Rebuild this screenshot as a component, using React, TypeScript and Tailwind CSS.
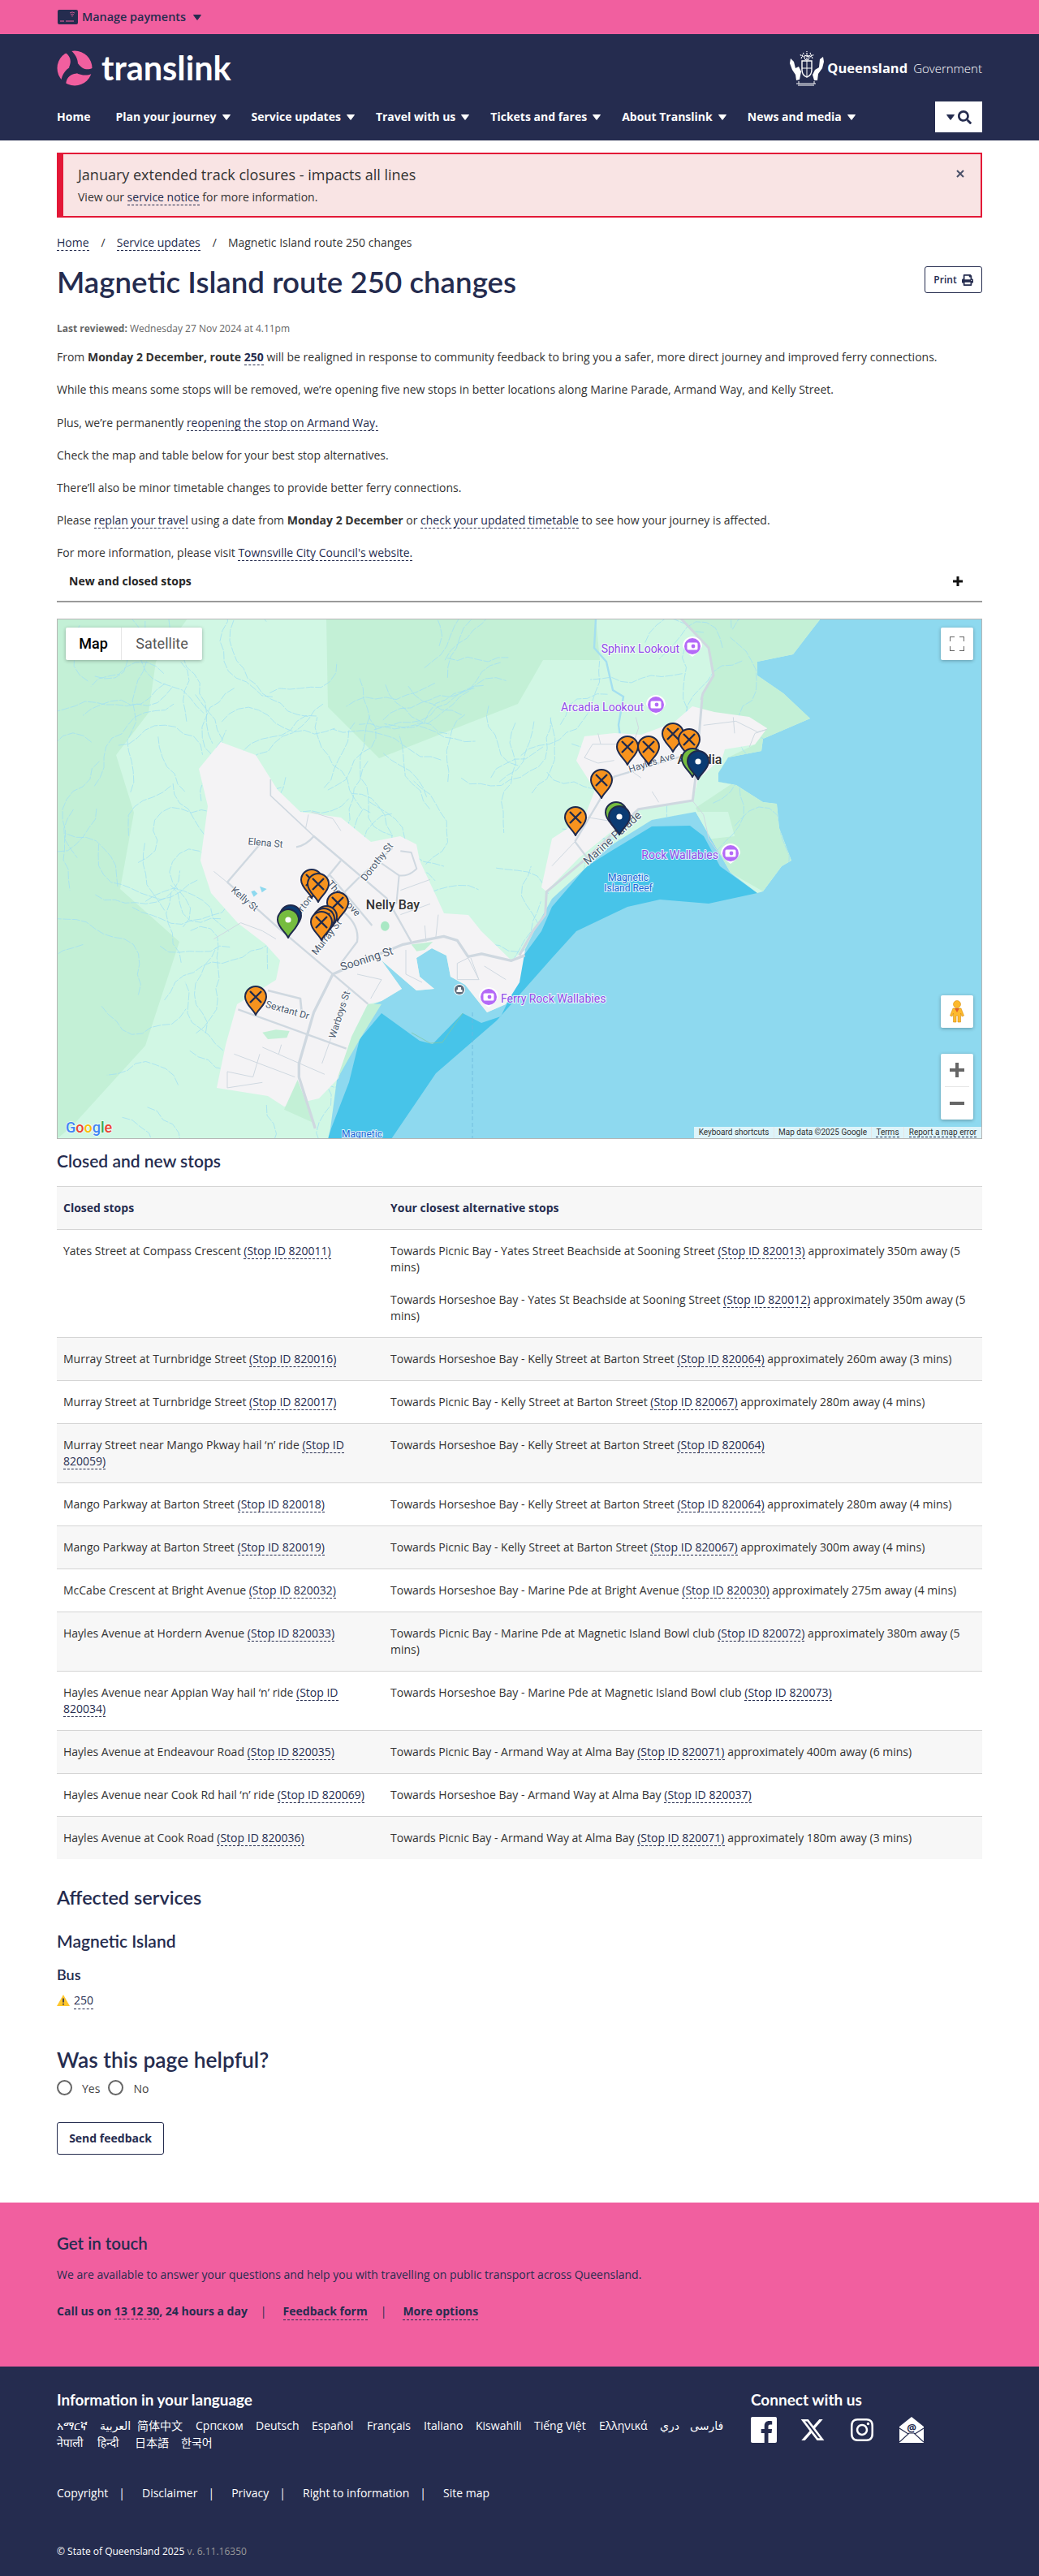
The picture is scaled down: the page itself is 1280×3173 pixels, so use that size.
import React from "react";
import { FaPrint, FaSearch, FaInstagram } from "react-icons/fa";
import { FaXTwitter } from "react-icons/fa6";

const L = ({ children, className = "" }: { children: React.ReactNode; className?: string }) => (
  <a className={"border-b border-dashed border-[#252c4f] text-[#252c4f] " + className}>{children}</a>
);

const Caret = ({ color = "#fff" }: { color?: string }) => (
  <svg width="10" height="7" viewBox="0 0 10 7" className="shrink-0"><path d="M0.5 0.5H9.5L5 6.5Z" fill={color} stroke={color} strokeLinejoin="round" /></svg>
);

type Row = { a: [string, string, string?]; b: [string, string, string][] ; };
const rows: Row[] = [
  { a: ["Yates Street at Compass Crescent ", "(Stop ID 820011)"], b: [["Towards Picnic Bay - Yates Street Beachside at Sooning Street ", "(Stop ID 820013)", " approximately 350m away (5 mins)"], ["Towards Horseshoe Bay - Yates St Beachside at Sooning Street ", "(Stop ID 820012)", " approximately 350m away (5 mins)"]] },
  { a: ["Murray Street at Turnbridge Street ", "(Stop ID 820016)"], b: [["Towards Horseshoe Bay - Kelly Street at Barton Street ", "(Stop ID 820064)", " approximately 260m away (3 mins)"]] },
  { a: ["Murray Street at Turnbridge Street ", "(Stop ID 820017)"], b: [["Towards Picnic Bay - Kelly Street at Barton Street ", "(Stop ID 820067)", " approximately 280m away (4 mins)"]] },
  { a: ["Murray Street near Mango Pkway hail ‘n’ ride ", "(Stop ID 820059)"], b: [["Towards Horseshoe Bay - Kelly Street at Barton Street ", "(Stop ID 820064)", ""]] },
  { a: ["Mango Parkway at Barton Street ", "(Stop ID 820018)"], b: [["Towards Horseshoe Bay - Kelly Street at Barton Street ", "(Stop ID 820064)", " approximately 280m away (4 mins)"]] },
  { a: ["Mango Parkway at Barton Street ", "(Stop ID 820019)"], b: [["Towards Picnic Bay - Kelly Street at Barton Street ", "(Stop ID 820067)", " approximately 300m away (4 mins)"]] },
  { a: ["McCabe Crescent at Bright Avenue ", "(Stop ID 820032)"], b: [["Towards Horseshoe Bay - Marine Pde at Bright Avenue ", "(Stop ID 820030)", " approximately 275m away (4 mins)"]] },
  { a: ["Hayles Avenue at Hordern Avenue ", "(Stop ID 820033)"], b: [["Towards Picnic Bay - Marine Pde at Magnetic Island Bowl club ", "(Stop ID 820072)", " approximately 380m away (5 mins)"]] },
  { a: ["Hayles Avenue near Appian Way hail ‘n’ ride ", "(Stop ID 820034)"], b: [["Towards Horseshoe Bay - Marine Pde at Magnetic Island Bowl club ", "(Stop ID 820073)", ""]] },
  { a: ["Hayles Avenue at Endeavour Road ", "(Stop ID 820035)"], b: [["Towards Picnic Bay - Armand Way at Alma Bay ", "(Stop ID 820071)", " approximately 400m away (6 mins)"]] },
  { a: ["Hayles Avenue near Cook Rd hail ‘n’ ride ", "(Stop ID 820069)"], b: [["Towards Horseshoe Bay - Armand Way at Alma Bay ", "(Stop ID 820037)", ""]] },
  { a: ["Hayles Avenue at Cook Road ", "(Stop ID 820036)"], b: [["Towards Picnic Bay - Armand Way at Alma Bay ", "(Stop ID 820071)", " approximately 180m away (3 mins)"]] },
];

const LAND = "1011,762 1000,776 977,806 933,815 933,832 965,854 998,885 940,910 938,925 897,933 885,952 885,963 907,967 940,988 957,990 960,1020 975,1060 963,1067 940,1098 933,1100 900,1075 880,1040 857,1000 803,1010 750,1043 680,1107 660,1143 643,1177 650,1157 635,1183 640,1203 623,1237 600,1247 573,1213 555,1203 550,1177 532,1168 513,1180 517,1203 535,1218 513,1220 470,1183 495,1218 470,1233 460,1237 443,1263 427,1303 415,1330 407,1390 404,1403 70,1403 70,762";
const TOWN1 = "272,914 315,930 342,973 370,1000 420,1007 457,1037 493,1030 513,1040 517,1060 537,1103 547,1125 577,1127 593,1147 630,1183 647,1170 640,1210 623,1237 600,1247 573,1213 555,1203 550,1177 532,1168 513,1180 517,1203 535,1218 513,1220 470,1183 495,1218 470,1233 453,1237 433,1277 417,1328 393,1353 350,1363 330,1350 267,1340 278,1287 292,1237 340,1207 345,1183 327,1163 293,1137 260,1100 247,1060 256,993 245,947";
const TOWN2 = "710,937 720,907 757,903 790,905 830,890 853,870 880,877 923,883 945,897 930,917 893,923 890,933 860,960 853,987 787,997 767,1013 713,1057 673,1098 667,1093 680,1033 720,1007 733,973";

function streams() {
  let s = 20250;
  const r = () => { s = (s * 1664525 + 1013904223) >>> 0; return s / 4294967296; };
  const out: string[] = [];
  for (let i = 0; i < 170; i++) {
    let x = 70 + r() * 860, y = 762 + r() * 640;
    let a = r() * 6.28;
    let d = `M${x.toFixed(1)} ${y.toFixed(1)}`;
    const n = 6 + Math.floor(r() * 8);
    for (let k = 0; k < n; k++) {
      a += (r() - 0.5) * 1.3;
      x += Math.cos(a) * 13; y += Math.sin(a) * 13;
      d += ` L${x.toFixed(1)} ${y.toFixed(1)}`;
    }
    out.push(d);
  }
  return out;
}
const STREAMS = streams();

const Pin = ({ x, y, fill, kind }: { x: number; y: number; fill: string; kind: "x" | "dot" }) => (
  <g transform={`translate(${x} ${y})`}>
    <path d="M0 21 C-3 14 -13 8 -13 -1 A13 13 0 1 1 13 -1 C13 8 3 14 0 21Z" fill={fill} stroke="#1f2a4d" strokeWidth="2" strokeLinejoin="round" />
    {kind === "x" ? (
      <path d="M-7 -8 L7 6 M7 -8 L-7 6" stroke="#1f2a4d" strokeWidth="2.4" />
    ) : (
      <circle cx="0" cy="-1" r="3.6" fill="#fff" />
    )}
  </g>
);

const Poi = ({ x, y }: { x: number; y: number }) => (
  <g transform={`translate(${x} ${y})`}>
    <path d="M-12 0 A12 12 0 1 1 12 0 Q8 8 0 13 Q-8 8 -12 0Z" fill="#fff" />
    <circle r="10" fill="#b46af7" />
    <rect x="-6.5" y="-4.5" width="13" height="9" rx="1.5" fill="#fff" />
    <circle cx="1" cy="0" r="2.4" fill="#b46af7" />
  </g>
);

const Lbl = ({ x, y, r = 0, size = 12, fill = "#4d5b70", weight = 400, anchor = "middle", children }: any) => (
  <text x={x} y={y} transform={r ? `rotate(${r} ${x} ${y})` : undefined} fontSize={size} fontWeight={weight} fill={fill} textAnchor={anchor} dominantBaseline="middle" stroke="#ffffff" strokeOpacity="0.8" strokeWidth="2" paintOrder="stroke" fontFamily="Roboto, sans-serif">{children}</text>
);

function MapArt() {
  return (
    <svg viewBox="71 763 1138 639" className="block w-full h-full" preserveAspectRatio="none">
      <defs><clipPath id="land"><polygon points={LAND} /></clipPath></defs>
      <rect x="70" y="762" width="1140" height="641" fill="#8ed9ef" />
      <polygon points="404,1403 408,1390 430,1333 443,1280 470,1248 517,1282 533,1286 570,1248 593,1260 617,1252 635,1215 643,1180 667,1147 680,1117 723,1067 750,1050 803,1018 850,1017 867,1030 887,1067 933,1100 873,1113 813,1108 773,1117 710,1147 680,1180 612,1257 537,1322 482,1403" fill="#47c4e9" />
      <polygon points={LAND} fill="#d1f7e4" />
      <g clipPath="url(#land)">
        <polygon points="70,762 231,762 192,815 183,878 143,930 165,1001 148,1095 221,1160 179,1288 89,1387 70,1403" fill="#c3f0d6" />
        <polygon points="402,762 404,871 467,934 638,867 669,813 739,813 734,762" fill="#c3f0d6" />
        <polygon points="839,762 873,798 879,832 866,854 860,902 870,890 900,880 945,897 930,917 897,933 885,952 885,963 907,967 940,988 957,990 960,1020 975,1060 963,1067 940,1098 900,1075 880,1040 857,995 1000,900 1020,762" fill="#c3f0d6" />
        <polygon points="857,1000 897,1000 905,1030 860,1035" fill="#d1f7e4" />
        {STREAMS.map((d, i) => <path key={i} d={d} fill="none" stroke="#a2e0f2" strokeWidth="0.8" strokeDasharray="10 1.5" />)}
        <path d="M734 762 L732 798 L747 815 L755 850 L768 858 L762 893 L766 920 L762 958 L772 975" fill="none" stroke="#a4dff0" strokeWidth="2.4" />
      </g>
      <polygon points={TOWN1} fill="#f4f3f5" />
      <polygon points={TOWN2} fill="#f4f3f5" />
      <g transform="translate(230 970) scale(0.3333)" fill="none" stroke="#cfd8e0" strokeLinejoin="round">
        <path d="M410 1080 L360 1190 L470 1240Z" fill="#c3f0d6" stroke="none" />
        <path d="M670 800 L720 800 L640 930 L600 1000 L555 1080 L610 920Z" fill="#c3f0d6" stroke="none" />
        <path d="M280 905 L330 895 L380 900 L370 925 L300 930Z" fill="#c3f0d6" stroke="none" />
        <path d="M830 580 L910 570 L880 600 L850 605Z" fill="#c3f0d6" stroke="none" />
        <ellipse cx="733" cy="512" rx="16" ry="18" fill="#a9e8c4" stroke="none" />
        <path d="M250 380 L262 392 L248 404 L238 385Z M270 365 L296 375 L278 388Z" fill="#8ed9ef" stroke="none" />
        <path d="M1250 620 L1200 640 L1090 615 L1040 625 L1000 565 L950 550 L800 580 L640 645 L540 690 L470 830 L415 1020 L415 1070 L475 1260" strokeWidth="10" />
        <path d="M150 350 L340 520 L540 690 L670 800" strokeWidth="7" />
        <path d="M150 350 L275 205 M405 220 Q440 215 470 180 L740 410 L830 570" strokeWidth="7" />
        <path d="M470 180 L310 30 L310 -30" strokeWidth="5" />
        <path d="M570 270 L480 380 M640 330 L540 430 M530 325 L685 510 M580 460 Q640 510 630 570 L570 650" strokeWidth="7" />
        <path d="M640 330 L760 225 M790 235 L830 240 L850 300 Q820 330 785 325 L720 280 M785 325 L775 430" strokeWidth="6" />
        <path d="M300 750 L420 780 L425 830" strokeWidth="8" />
        <path d="M190 820 L590 965" strokeWidth="7" />
        <path d="M600 740 L500 1020 M280 960 L510 1060 M175 985 L400 1070 M270 985 L245 1070 L150 1050 L150 1110 L280 1090 M630 690 L720 710 L680 780 M350 950 L340 985 M810 600 L810 690 L870 720 M1040 630 L1000 650 L1000 710 L1080 710 L1040 630 M1050 630 L1080 710 M1100 660 L1180 710 M880 510 L885 570 M930 470 L920 560 M100 560 L200 500 L280 530 L330 560 M450 100 L440 150 M460 90 L540 115 L570 160 M790 470 L900 430 M790 380 L900 340 M100 310 L180 375" strokeWidth="3" />
      </g>
      <g transform="translate(640 860) scale(0.3333)" fill="none" stroke="#cfd8e0" strokeLinejoin="round">
        <path d="M675 0 L650 300 L640 378 L440 410 L250 590 L100 715 L95 800 L50 860 L0 950" strokeWidth="9" />
        <path d="M205 530 L300 370 L350 290 L600 215 M205 530 L250 590" strokeWidth="7" />
        <path d="M120 620 L205 530 M250 440 L340 455 M240 220 L270 170 L430 170 M240 220 L290 240 L350 230 M290 130 L300 170 M430 70 L440 110 L420 170 M415 270 L450 295 M490 345 L515 385 M680 100 L800 85 L880 125 L915 115 L870 130 L850 180 M790 70 L795 130 M640 380 L680 430 L700 520 L735 570" strokeWidth="3" />
      </g>
      <path d="M839 762 L873 798 L879 832 L866 854 L864 862" fill="none" stroke="#cfd8e0" strokeWidth="3" />
      <path d="M582 1247 V1403" stroke="#6cb8dd" strokeWidth="0.8" strokeDasharray="5 3" fill="none" />
      <path d="M507 1272 L530 1285 L545 1284 L570 1248" stroke="#7fc8a8" strokeWidth="0.8" fill="none" />

      <Lbl x={327} y={1039} r={5}>Elena St</Lbl>
      <Lbl x={301} y={1108} r={40}>Kelly St</Lbl>
      <Lbl x={465} y={1062} r={-52}>Dorothy St</Lbl>
      <Lbl x={377} y={1113} r={-52}>Barton St</Lbl>
      <Lbl x={403} y={1155} r={-52}>Murray St</Lbl>
      <Lbl x={423} y={1107} r={48}>The Grove</Lbl>
      <Lbl x={452} y={1182} r={-18} size={14}>Sooning St</Lbl>
      <Lbl x={419} y={1250} r={-72}>Warboys St</Lbl>
      <Lbl x={354} y={1245} r={16}>Sextant Dr</Lbl>
      <Lbl x={803} y={940} r={-17}>Hayles Ave</Lbl>
      <Lbl x={755} y={1033} r={-42} size={14}>Marine Parade</Lbl>
      <Lbl x={484} y={1116} size={16} fill="#333" weight={500}>Nelly Bay</Lbl>
      <Lbl x={862} y={937} size={16} fill="#333" weight={500}>Arcadia</Lbl>
      <Lbl x={774} y={1082} size={12} fill="#1a66d8">Magnetic</Lbl>
      <Lbl x={774} y={1095} size={12} fill="#1a66d8">Island Reef</Lbl>
      <Lbl x={446} y={1398} size={12} fill="#1a66d8">Magnetic</Lbl>
      <Lbl x={837} y={800} size={14} fill="#8f4be8" anchor="end">Sphinx Lookout</Lbl>
      <Lbl x={793} y={872} size={14} fill="#8f4be8" anchor="end">Arcadia Lookout</Lbl>
      <Lbl x={885} y={1054} size={14} fill="#8f4be8" anchor="end">Rock Wallabies</Lbl>
      <Lbl x={617} y={1231} size={14} fill="#8f4be8" anchor="start">Ferry Rock Wallabies</Lbl>
      <Poi x={853} y={796} /><Poi x={808} y={868} /><Poi x={900} y={1051} /><Poi x={602} y={1228} />
      <g transform="translate(566 1219)">
        <circle r="7" fill="#fff" /><circle r="6" fill="#5d6b7a" /><rect x="-3.5" y="0" width="7" height="3" fill="#fff" /><rect x="-2" y="-3" width="4" height="3" fill="#fff" />
      </g>

      <Pin x={384} y={1085} fill="#f7931e" kind="x" />
      <Pin x={392} y={1090} fill="#f7931e" kind="x" />
      <Pin x={416} y={1113} fill="#f7931e" kind="x" />
      <Pin x={402} y={1130} fill="#f7931e" kind="x" />
      <Pin x={399} y={1133} fill="#f7931e" kind="x" />
      <Pin x={396} y={1137} fill="#f7931e" kind="x" />
      <Pin x={315} y={1229} fill="#f7931e" kind="x" />
      <Pin x={358} y={1129} fill="#0b3b73" kind="dot" />
      <Pin x={355} y={1134} fill="#76bc3f" kind="dot" />
      <Pin x={829} y={905} fill="#f7931e" kind="x" />
      <Pin x={849} y={912} fill="#f7931e" kind="x" />
      <Pin x={773} y={921} fill="#f7931e" kind="x" />
      <Pin x={799} y={921} fill="#f7931e" kind="x" />
      <Pin x={741} y={962} fill="#f7931e" kind="x" />
      <Pin x={709} y={1008} fill="#f7931e" kind="x" />
      <Pin x={853} y={936} fill="#76bc3f" kind="dot" />
      <Pin x={860} y={939} fill="#0b3b73" kind="dot" />
      <Pin x={759} y={1002} fill="#76bc3f" kind="dot" />
      <Pin x={763} y={1007} fill="#0b3b73" kind="dot" />

      <text x="81" y="1395" fontSize="18" fontFamily="Roboto, sans-serif" fontWeight="500" stroke="#fff" strokeOpacity="0.7" strokeWidth="1.5" paintOrder="stroke">
        <tspan fill="#4285f4">G</tspan><tspan fill="#ea4335">o</tspan><tspan fill="#fbbc05">o</tspan><tspan fill="#4285f4">g</tspan><tspan fill="#34a853">l</tspan><tspan fill="#ea4335">e</tspan>
      </text>
    </svg>
  );
}

const MapBtn = ({ className, children }: { className: string; children: React.ReactNode }) => (
  <div className={"absolute bg-white flex items-center justify-center rounded-[2px] shadow-[0_1px_4px_rgba(0,0,0,0.3)] " + className}>{children}</div>
);

function Map() {
  return (
    <div className="relative h-[641px] border border-[#b5b5b5] overflow-hidden font-['Roboto',sans-serif]">
      <MapArt />
      <div className="absolute left-[10px] top-[10px] h-10 flex bg-white rounded-[2px] shadow-[0_1px_4px_rgba(0,0,0,0.3)] text-[18px]">
        <div className="w-[69px] flex items-center justify-center text-black font-medium border-r border-[#e6e6e6]">Map</div>
        <div className="w-[99px] flex items-center justify-center text-[#565656]">Satellite</div>
      </div>
      <MapBtn className="right-[10px] top-[10px] w-10 h-10">
        <svg width="18" height="18" viewBox="0 0 18 18"><path d="M0 6V0H6M12 0H18V6M18 12V18H12M6 18H0V12" fill="none" stroke="#666" strokeWidth="2" /></svg>
      </MapBtn>
      <MapBtn className="right-[10px] top-[463px] w-10 h-10">
        <svg width="18" height="28" viewBox="0 0 18 28">
          <circle cx="9" cy="5" r="4.5" fill="#fdb92c" stroke="#d68f10" strokeWidth="0.6" />
          <path d="M4 10 H14 L17.5 19 L15 20 L13.5 16 V27 H10 V19 H8 V27 H4.5 V16 L3 20 L0.5 19Z" fill="#fdb92c" stroke="#d68f10" strokeWidth="0.6" />
          <path d="M6 10 L9 15 L12 10Z" fill="#e0612a" />
        </svg>
      </MapBtn>
      <div className="absolute right-[10px] top-[535px] w-10 h-[81px] bg-white rounded-[2px] shadow-[0_1px_4px_rgba(0,0,0,0.3)] flex flex-col items-center">
        <div className="h-10 flex items-center justify-center">
          <svg width="18" height="18" viewBox="0 0 18 18"><path d="M0 9H18M9 0V18" stroke="#666" strokeWidth="4" /></svg>
        </div>
        <div className="w-[30px] h-px bg-[#e6e6e6]" />
        <div className="h-10 flex items-center justify-center">
          <svg width="18" height="18" viewBox="0 0 18 18"><path d="M0 9H18" stroke="#666" strokeWidth="4" /></svg>
        </div>
      </div>
      <div className="absolute right-0 bottom-0 h-[14px] flex text-[10px] leading-[14px] text-[#333] bg-white/70">
        <div className="w-[99px] text-center border-r border-[#e6e6e6]">Keyboard shortcuts</div>
        <div className="w-[120px] text-center border-r border-[#e6e6e6]">Map data ©2025 Google</div>
        <div className="w-[40px] text-center border-r border-[#e6e6e6]"><span className="border-b border-dashed border-[#252c4f]">Terms</span></div>
        <div className="w-[95px] text-center"><span className="border-b border-dashed border-[#252c4f]">Report a map error</span></div>
      </div>
    </div>
  );
}

const Logo = () => (
  <svg width="44" height="44" viewBox="-22 -22 44 44" className="shrink-0">
    <circle r="21.5" fill="#f15f9f" />
    {[0, 120, 240].map((a) => (
      <path key={a} transform={`rotate(${a})`} d="M-13 -20 C-6 -16 -3 -10 -7 -1 L-3 3 L3 1 C6 -8 2 -17 -6 -23 Z" fill="#252c4f" />
    ))}
  </svg>
);

const Crest = () => (
  <svg width="44" height="44" viewBox="0 0 44 44" className="shrink-0" fill="none" stroke="#fff">
    <path d="M16 13 H28 V24 Q28 31 22 33 Q16 31 16 24Z" strokeWidth="1.4" fill="#252c4f" />
    <path d="M22 13 V33 M16 22 H28" strokeWidth="1" />
    <path d="M2 10 L6 14 L8 22 L12 20 L15 26 L13 36 L9 37 L8 30 L4 24 L1 16Z" fill="#fff" stroke="none" />
    <path d="M42 8 L38 11 L37 21 L32 24 L29 30 L31 37 L35 37 L36 29 L41 22 L43 14Z" fill="#fff" stroke="none" />
    <path d="M15 10 L18 3 M22 11 V1 M29 10 L26 3 M18 8 L13 5 M26 8 L31 5 M19 6 L24 8 L27 5" strokeWidth="1.2" strokeDasharray="2 1" />
    <circle cx="22" cy="9" r="3" strokeWidth="1" />
    <path d="M9 41 H33 M11 43 H31 M12 38 V41 M31 38 V41" strokeWidth="1" />
  </svg>
);

const navItems = ["Plan your journey", "Service updates", "Travel with us", "Tickets and fares", "About Translink", "News and media"];
const langs1: [string, string][] = [["አማርኛ", "w-[37px]"], ["العربية", "w-[30px]"], ["简体中文", "w-[56px]"], ["Српском", "w-[58px]"], ["Deutsch", "w-[53px]"], ["Español", "w-[52px]"], ["Français", "w-[54px]"], ["Italiano", "w-[48px]"], ["Kiswahili", "w-[56px]"], ["Tiếng Việt", "w-[64px]"], ["Ελληνικά", "w-[59px]"], ["دري", "w-[21px]"], ["فارسی", "w-[31px]"]];
const langs2: [string, string][] = [["नेपाली", "w-[34px]"], ["हिन्दी", "w-[30px]"], ["日本語", "w-[41px]"], ["한국어", "w-[40px]"]];
const HEAD = "font-['Lato',sans-serif] text-[#252c4f] font-semibold";

export default function App() {
  return (
    <div className="w-[1280px] bg-white text-[14px] leading-5 text-[#333] font-['Open_Sans','Noto_Sans','Noto_Sans_CJK_SC','DejaVu_Sans',sans-serif]">
      <div className="h-[42px] bg-[#f15f9f] px-[70px] flex items-center gap-1 text-[#252c4f] font-semibold text-[14.4px]">
        <svg width="26" height="18" viewBox="0 0 26 18" className="ml-px">
          <rect width="25" height="18" rx="2" fill="#252c4f" />
          <path d="M3 14H8M10 14H20" stroke="#f15f9f" strokeWidth="1" />
          <path d="M16 6a3 3 0 0 1 4 0M17 8a1.5 1.5 0 0 1 2 0M15 4a5 5 0 0 1 6 0" stroke="#f15f9f" strokeWidth="0.8" fill="none" />
        </svg>
        <span>Manage payments</span>
        <span className="ml-[5px]"><Caret color="#252c4f" /></span>
      </div>

      <header className="h-[131px] bg-[#252c4f] px-[70px] text-white">
        <div className="h-[83px] flex justify-between pt-[20px]">
          <div className="flex items-start gap-[11px]">
            <Logo />
            <span className="font-['Lato',sans-serif] text-[41.5px] leading-[42px] font-bold">translink</span>
          </div>
          <div className="flex items-start gap-[3px]">
            <Crest />
            <div className="h-11 flex items-center gap-[7px]">
              <span className="font-bold text-[16.5px]">Queensland</span>
              <span className="font-light text-[15px]">Government</span>
            </div>
          </div>
        </div>
        <div className="h-[38px] flex items-center justify-between">
          <nav className="flex items-center gap-[26px] font-bold text-[14px]">
            <a className="mr-[5px]">Home</a>
            {navItems.map((n) => (
              <a key={n} className="flex items-center gap-[7px]">{n}<Caret /></a>
            ))}
          </nav>
          <div className="w-[58px] h-[38px] bg-white flex items-center justify-center gap-1 text-[#252c4f]">
            <Caret color="#252c4f" />
            <FaSearch className="text-[17px]" />
          </div>
        </div>
      </header>

      <main className="px-[70px]">
        <div className="relative mt-[15px] h-20 bg-[#f9e4e4] border-2 border-l-8 border-[#e31837] pl-[18px] pt-[12px]">
          <div className="text-[18px] leading-[26px] text-[#333]">January extended track closures - impacts all lines</div>
          <div className="mt-[5px]">View our <L>service notice</L> for more information.</div>
          <svg width="10" height="10" viewBox="0 0 10 10" className="absolute right-[20px] top-[19px]"><path d="M1 1L9 9M9 1L1 9" stroke="#4a5068" strokeWidth="2" /></svg>
        </div>

        <div className="mt-[21px] h-5 flex">
          <L>Home</L><span className="ml-[15px] mr-[14px]">/</span><L>Service updates</L><span className="ml-[15px] mr-[14px]">/</span><span>Magnetic Island route 250 changes</span>
        </div>

        <div className="mt-[18px] h-10 flex justify-between items-start">
          <h1 className={HEAD + " text-[36.7px] leading-10"}>Magnetic Island route 250 changes</h1>
          <button className="mt-px w-[71px] h-[33px] border border-[#252c4f] rounded-[3px] flex items-center justify-center gap-[6px] text-[12px] font-semibold text-[#252c4f]">Print <FaPrint className="text-[14px]" /></button>
        </div>

        <div className="mt-[28px] text-[12px] text-[#666]"><b>Last reviewed:</b> Wednesday 27 Nov 2024 at 4.11pm</div>
        <p className="mt-[15px]">From <b>Monday 2 December, route <L>250</L></b> will be realigned in response to community feedback to bring you a safer, more direct journey and improved ferry connections.</p>
        <p className="mt-5">While this means some stops will be removed, we’re opening five new stops in better locations along Marine Parade, Armand Way, and Kelly Street.</p>
        <p className="mt-[21px]">Plus, we’re permanently <L>reopening the stop on Armand Way.</L></p>
        <p className="mt-5">Check the map and table below for your best stop alternatives.</p>
        <p className="mt-5">There’ll also be minor timetable changes to provide better ferry connections.</p>
        <p className="mt-5">Please <L>replan your travel</L> using a date from <b>Monday 2 December</b> or <L>check your updated timetable</L> to see how your journey is affected.</p>
        <p className="mt-5">For more information, please visit <L>Townsville City Council's website.</L></p>

        <div className="h-[51px] border-b-2 border-[#9a9a9a] flex items-center justify-between pl-[15px] pr-[24px] font-bold text-[#252525]">
          <span>New and closed stops</span>
          <svg width="12" height="12" viewBox="0 0 12 12"><path d="M0 6H12M6 0V12" stroke="#111" strokeWidth="3" /></svg>
        </div>

        <div className="mt-5"><Map /></div>

        <h2 className={HEAD + " mt-[13px] text-[21px] leading-7"}>Closed and new stops</h2>
        <table className="mt-[17px] w-full table-fixed border-collapse">
          <colgroup><col className="w-[403px]" /><col /></colgroup>
          <thead>
            <tr className="bg-[#f7f7f7] border-y border-[#d5d5d5]">
              <th className="py-4 px-2 text-left font-bold text-[#252c4f]">Closed stops</th>
              <th className="py-4 px-2 text-left font-bold text-[#252c4f]">Your closest alternative stops</th>
            </tr>
          </thead>
          <tbody>
            {rows.map((r, i) => (
              <tr key={i} className={(i % 2 === 1 ? "bg-[#f7f7f7] " : "") + "border-b border-[#d5d5d5] last:border-b-0"}>
                <td className="py-4 px-2 align-top">{r.a[0]}<L>{r.a[1]}</L></td>
                <td className="py-4 px-2 align-top">
                  {r.b.map((b, k) => (
                    <p key={k} className={k > 0 ? "mt-5" : ""}>{b[0]}<L>{b[1]}</L>{b[2]}</p>
                  ))}
                </td>
              </tr>
            ))}
          </tbody>
        </table>

        <h2 className={HEAD + " mt-[31px] text-[23.5px] leading-8"}>Affected services</h2>
        <h3 className={HEAD + " mt-6 text-[21px] leading-7"}>Magnetic Island</h3>
        <h4 className={HEAD + " mt-[15px] text-[18px] leading-6"}>Bus</h4>
        <div className="mt-[10px] h-5 flex items-center gap-[5px]">
          <svg width="16" height="14" viewBox="0 0 16 14"><path d="M8 0L16 14H0Z" fill="#ffc72c" /><path d="M8 4.5V9.5M8 10.8V12.5" stroke="#252c4f" strokeWidth="1.6" /></svg>
          <L>250</L>
        </div>
        <h2 className={HEAD + " mt-[43px] text-[26.4px] leading-10"}>Was this page helpful?</h2>
        <div className="mt-[6px] h-5 flex items-center">
          <span className="w-[19px] h-[19px] rounded-full border-2 border-[#666] -mt-1" />
          <span className="ml-3 text-[#444]">Yes</span>
          <span className="ml-[10px] w-[19px] h-[19px] rounded-full border-2 border-[#666] -mt-1" />
          <span className="ml-3 text-[#444]">No</span>
        </div>
        <button className="block mt-[31px] w-[132px] h-10 border border-[#252c4f] rounded-[3px] font-bold text-[#252c4f]">Send feedback</button>
      </main>

      <section className="mt-[59px] h-[202px] bg-[#f15f9f] px-[70px] pt-9 text-[#252c4f]">
        <h2 className={HEAD + " text-[20.5px] leading-7"}>Get in touch</h2>
        <p className="mt-[15px]">We are available to answer your questions and help you with travelling on public transport across Queensland.</p>
        <div className="mt-[25px] flex font-bold">
          <span>Call us on <L>13 12 30</L>, 24 hours a day</span>
          <span className="ml-[16px] mr-[20px] font-normal">|</span>
          <L>Feedback form</L>
          <span className="ml-[16px] mr-[20px] font-normal">|</span>
          <L>More options</L>
        </div>
      </section>

      <footer className="h-[259px] bg-[#252c4f] px-[70px] pt-[27px] text-white">
        <div className="flex">
          <div className="w-[855px]">
            <h2 className="font-['Lato',sans-serif] font-bold text-[18.9px] leading-7">Information in your language</h2>
            <div className="mt-[7px] flex gap-x-4 leading-[21px] whitespace-nowrap">{langs1.map(([l, w]) => <a key={l} className={w}>{l}</a>)}</div>
            <div className="flex gap-x-4 leading-[21px] whitespace-nowrap">{langs2.map(([l, w]) => <a key={l} className={w}>{l}</a>)}</div>
          </div>
          <div>
            <h2 className="font-['Lato',sans-serif] font-bold text-[19px] leading-7">Connect with us</h2>
            <div className="mt-[7px] flex items-start text-white">
              <svg width="32" height="32" viewBox="0 0 32 32">
                <rect width="32" height="32" rx="2" fill="#fff" />
                <path d="M21.5 32V20h4l.6-5h-4.6v-3c0-1.4.5-2.4 2.4-2.4H26.2V5.2C25.7 5.1 24.2 5 22.6 5 19.1 5 16.7 7.1 16.7 11v4h-4v5h4v12z" fill="#252c4f" />
              </svg>
              <FaXTwitter className="ml-7 w-8 h-8" />
              <FaInstagram className="ml-[29px] w-8 h-8" />
              <svg width="30" height="32" viewBox="0 0 30 32" className="ml-[30px]">
                <path d="M15 0L30 12V32H0V12Z" fill="#fff" />
                <path d="M0 31L12 20H18L30 31M0 14L11 21M30 14L19 21" stroke="#252c4f" strokeWidth="1.2" fill="none" />
                <text x="15" y="18" textAnchor="middle" fontSize="13" fontWeight="700" fill="#252c4f" fontFamily="Noto Sans, sans-serif">@</text>
              </svg>
            </div>
          </div>
        </div>
        <div className="mt-[42px] flex">
          {["Copyright", "Disclaimer", "Privacy", "Right to information"].map((t) => (
            <React.Fragment key={t}><a>{t}</a><span className="ml-[13px] mr-[21px]">|</span></React.Fragment>
          ))}
          <a>Site map</a>
        </div>
        <div className="mt-[52px] text-[12px]">© State of Queensland 2025 <span className="text-[#999]">v. 6.11.16350</span></div>
      </footer>
    </div>
  );
}
